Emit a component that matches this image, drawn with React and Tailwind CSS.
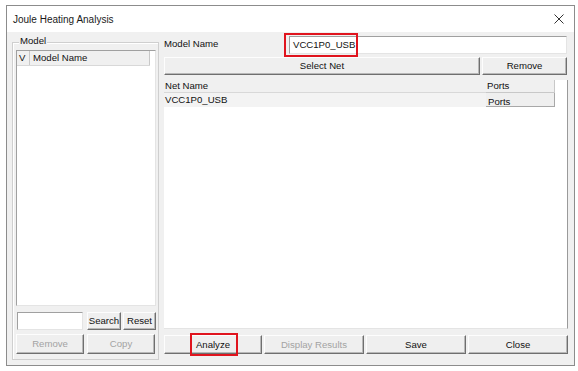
import React from "react";

// Raised Windows-style push button
function Btn({ label, className = "", disabled = false }) {
  return (
    <div
      className={
        "flex items-center justify-center bg-[#efefef] border border-t-[#fdfdfd] border-l-[#fdfdfd] border-r-[#6f6f6f] border-b-[#6f6f6f] shadow-[inset_-1px_-1px_0_#b8b8b8] leading-none " +
        (disabled ? "text-[#a3a3a3] " : "text-[#111] ") +
        className
      }
    >
      {label}
    </div>
  );
}

export default function App() {
  return (
    <div
      className="w-[578px] h-[371px] bg-white overflow-hidden text-[9.6px] text-[#111]"
      style={{ fontFamily: '"Liberation Sans", Arial, sans-serif' }}
    >
      {/* dialog window */}
      <div className="ml-[6px] mt-[5px] w-[569px] h-[361px] border border-[#8c8c8c] bg-[#f0f0f0] flex flex-col">
        {/* title bar */}
        <div className="h-[26px] bg-white flex items-center justify-between pl-[6px] pr-[10px]">
          <span className="text-[10px] text-[#1a1a1a]">Joule Heating Analysis</span>
          <svg width="10" height="10" viewBox="0 0 10 10">
            <path d="M0.5 0.5 L9.5 9.5 M9.5 0.5 L0.5 9.5" stroke="#333" strokeWidth="1" fill="none" />
          </svg>
        </div>

        {/* body */}
        <div className="flex-1 flex pl-[5px]">
          {/* Model group box */}
          <div className="relative mt-[10px] w-[147px] h-[318px] border border-[#cfcfcf] shadow-[inset_1px_1px_0_#ffffff] flex flex-col pl-[3px]">
            <span className="absolute left-[6px] top-[-7px] bg-[#f0f0f0] px-[1px] leading-none">Model</span>

            {/* model list */}
            <div className="mt-[7px] w-[140px] h-[256px] bg-white border border-t-[#a0a0a0] border-l-[#a0a0a0] border-r-[#e4e4e4] border-b-[#e4e4e4]">
              <div className="flex h-[15px] w-[133px] bg-[#f0f0f0] border-b border-[#d8d8d8]">
                <div className="w-[13px] border-r border-[#c8c8c8] pl-[2px] flex items-center">V</div>
                <div className="flex-1 border-r border-[#c8c8c8] pl-[3px] flex items-center">Model Name</div>
              </div>
            </div>

            {/* search row */}
            <div className="mt-[6px] flex items-center h-[18px]">
              <div className="ml-[1px] w-[66px] h-[18px] bg-white border border-t-[#a0a0a0] border-l-[#a0a0a0] border-r-[#e4e4e4] border-b-[#e4e4e4]" />
              <Btn label="Search" className="ml-[4px] w-[34px] h-[18px]" />
              <Btn label="Reset" className="ml-[2px] w-[33px] h-[18px]" />
            </div>

            {/* remove / copy row */}
            <div className="mt-[4px] flex h-[20px]">
              <Btn label="Remove" disabled className="w-[68px] h-[20px]" />
              <Btn label="Copy" disabled className="ml-[3px] w-[68px] h-[20px]" />
            </div>
          </div>

          {/* right column */}
          <div className="ml-[5px] w-[404px] flex flex-col">
            {/* model name row */}
            <div className="mt-[4px] flex items-center h-[18px]">
              <span className="w-[125px] pb-[2px]">Model Name</span>
              <div className="relative w-[278px] h-[18px] bg-white border border-t-[#a0a0a0] border-l-[#a0a0a0] border-r-[#e4e4e4] border-b-[#e4e4e4] flex items-center pl-[3px]">
                <span>VCC1P0_USB</span>
                <span className="ml-[1px] w-px h-[12px] bg-[#111]" />
                <div className="absolute left-[-6px] top-[-4px] w-[74px] h-[24px] border-2 border-[#e0141e]" />
              </div>
            </div>

            {/* select net row */}
            <div className="mt-[3px] flex h-[18px]">
              <Btn label="Select Net" className="w-[316px] h-[18px]" />
              <Btn label="Remove" className="ml-[2px] w-[85px] h-[18px]" />
            </div>

            {/* net table */}
            <div className="mt-[5px] h-[249px] bg-white border-r border-[#9a9a9a] border-b border-b-[#e4e4e4]">
              <div className="flex h-[13px]">
                <div className="w-[322px] bg-[#f0f0f0] border-b border-[#d8d8d8] pl-[1px] flex items-center">Net Name</div>
                <div className="w-[69px] bg-[#f0f0f0] border-b border-r border-[#c8c8c8] pl-[1px] flex items-center">Ports</div>
              </div>
              <div className="flex h-[14px]">
                <div className="w-[322px] bg-[#f3f3f3] pl-[1px] flex items-center">VCC1P0_USB</div>
                <div className="w-[69px] h-[14px] bg-[#efefef] border-r border-b border-[#a8a8a8] overflow-hidden pl-[2px] pt-[4px] leading-none">
                  Ports
                </div>
              </div>
            </div>

            {/* bottom buttons */}
            <div className="mt-[6px] flex gap-[2px] h-[19px]">
              <div className="relative w-[98px] h-[19px]">
                <Btn label="Analyze" className="w-[98px] h-[19px]" />
                <div className="absolute left-[26px] top-[-2px] w-[48px] h-[23px] border-2 border-[#e0141e]" />
              </div>
              <Btn label="Display Results" disabled className="w-[100px] h-[19px]" />
              <Btn label="Save" className="w-[100px] h-[19px]" />
              <Btn label="Close" className="w-[100px] h-[19px]" />
            </div>
          </div>
        </div>
      </div>
    </div>
  );
}
